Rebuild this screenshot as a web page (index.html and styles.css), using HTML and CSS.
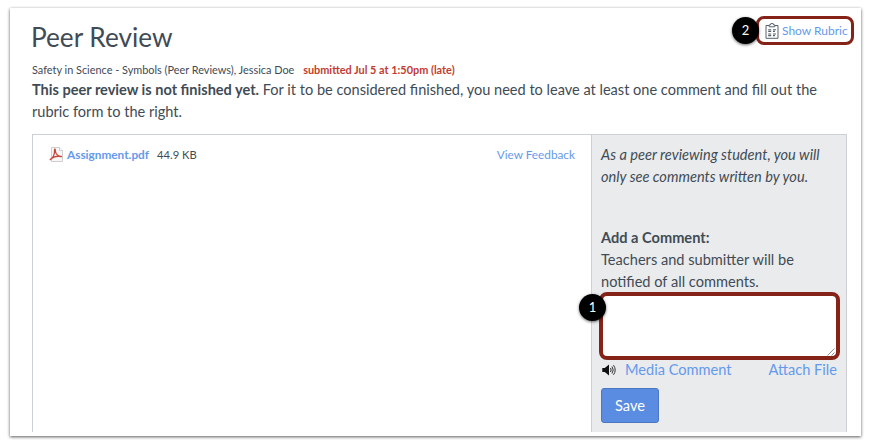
FILE: index.html
```html
<!DOCTYPE html>
<html lang="en">
<head>
<meta charset="utf-8">
<title>Peer Review</title>
<link rel="stylesheet" href="styles.css">
</head>
<body>
<main class="card">
  <header class="head">
    <h1>Peer Review</h1>
    <div class="rubric">
      <span class="step step-rubric">2</span>
      <svg class="rubric-icon" width="14" height="16" viewBox="0 0 14 16" fill="none" stroke="#55606b"><path d="M4 2.500H1v12.800h12V2.500h-3M4.200 3.800h5.600V1.900H8.600L8.200.6H5.800l-.4 1.300H4.200z" stroke-width="1"/><path d="M3.200 6.800h3M8 6.800h3M3.200 8.400h3M8 8.400h2M3.200 11h3M8 11h3M3.200 12.600h3M8 12.600h2" stroke-width="1.100"/></svg>
      <a>Show Rubric</a>
    </div>
  </header>
  <p class="meta">Safety in Science - Symbols (Peer Reviews), Jessica Doe <strong>submitted Jul 5 at 1:50pm (late)</strong></p>
  <p class="notice"><strong>This peer review is not finished yet.</strong> <span>For it to be considered finished, you need to leave at least one comment and fill out the<br>rubric form to the right.</span></p>
  <section class="panel">
    <div class="file">
      <svg class="pdf" width="15" height="15" viewBox="0 0 15 15"><path d="M2.500.5h8l3 3v11h-11z" fill="#f7f7f7" stroke="#cfcfcf"/><path d="M10.500.5v3h3" fill="#fff" stroke="#cfcfcf"/><path d="M.7 12.800C4 11.500 6 7 5.500 3c0-1.500 1-1 .8.7C6.600 7 9.500 9.300 13 9.600M1 12.700C4 9.800 8.500 8.700 13 9.600" fill="none" stroke="#c5483c" stroke-width="1.300"/></svg>
      <a class="name">Assignment.pdf</a><span class="size">44.9 KB</span><a class="feedback">View Feedback</a>
    </div>
    <aside class="side">
      <p class="hint">As a peer reviewing student, you will<br>only see comments written by you.</p>
      <p class="label">Add a Comment:</p>
      <p class="note">Teachers and submitter will be<br>notified of all comments.</p>
      <div class="comment"><span class="step step-comment">1</span>
        <svg class="grip" width="8" height="8" viewBox="0 0 8 8" stroke="#777" stroke-width=".8"><path d="M.5 7.500l7-7M4.500 7.500l3-3"/></svg>
      </div>
      <div class="links">
        <svg width="14" height="12" viewBox="0 0 14 12"><path d="M.3 4h2.500L7 .6v10.800L2.800 8H.3z" fill="#111"/><path d="M8.500 4q1.300 2 0 4M10 2.500q2.400 3.500 0 7M11.500 1.200q3.400 4.800 0 9.600" fill="none" stroke="#333" stroke-width="1"/></svg>
        <a class="media">Media Comment</a><a class="attach">Attach File</a>
      </div>
      <button class="save">Save</button>
    </aside>
  </section>
</main>
</body>
</html>
```
FILE: styles.css
```css
* { box-sizing: border-box; }
body { margin: 0; min-height: 447px; padding: 8px 11px 0 10px; background: #fff; color: #414b55; font-family: Lato, sans-serif; }
h1, p { margin: 0; font-weight: 400; }
a { color: #659aeb; white-space: nowrap; }
strong { font-weight: 700; }
.card { height: 428px; padding: 0 15px 4px 22px; display: flex; flex-direction: column; box-shadow: 0 1px 3px rgba(0,0,0,.65); background: #fff; }
.head { height: 53px; display: flex; flex-shrink: 0; justify-content: space-between; align-items: flex-start; margin-right: -8px; }
h1 { font-size: 26.200px; line-height: 32px; padding-top: 13px; margin-left: -1px; white-space: nowrap; }
.rubric { position: relative; width: 98px; height: 29px; margin: 8px 0 0; padding-left: 6px; display: flex; align-items: center; border: 3px solid #862318; border-radius: 8px; }
.rubric-icon { flex-shrink: 0; margin-top: 1px; }
.rubric a { font-size: 12px; line-height: 16px; margin: 0 0 0 3px; }
.step { position: absolute; width: 27px; height: 27px; border-radius: 50%; background: #000; color: #fff; font-size: 13px; line-height: 27px; text-align: center; box-shadow: 0 1px 3px rgba(0,0,0,.6); }
.step-rubric { left: -27px; top: -2px; }
.step-comment { left: -24px; top: -2px; }
.meta { height: 18px; flex-shrink: 0; font-size: 10.900px; line-height: 18px; white-space: nowrap; }
.meta strong { color: #c33b30; margin-left: 6px; }
.notice { height: 55px; flex-shrink: 0; font-size: 14.560px; line-height: 22px; white-space: nowrap; }
.panel { flex: 1; display: flex; border: 1px solid #ccd0d5; border-bottom: 0; width: 815px; }
.file { flex: 1; height: 39px; padding: 0 16px; display: flex; align-items: center; font-size: 11.800px; }
.pdf { margin-right: 3px; }
.name { font-weight: 700; }
.size { margin-left: 8px; font-size: 11.200px; }
.feedback { margin-left: auto; }
.side { width: 255px; padding: 9px 0 0 9px; background: #e9ebed; border-left: 1px solid #ccd0d5; font-size: 14.600px; line-height: 22px; white-space: nowrap; }
.hint { font-style: italic; height: 83px; }
.label { font-weight: 700; }
.comment { position: relative; width: 241px; height: 68px; margin: -1px 0 0 -2px; border: 4px solid #862318; border-radius: 8px; background: #fff; }
.grip { position: absolute; right: 1px; bottom: 0; }
.links { display: flex; align-items: center; width: 236px; height: 20px; padding-left: 1px; }
.media { margin-left: 9px; }
.attach { margin-left: auto; }
.save { display: block; width: 58px; height: 35px; margin-top: 8px; padding: 0; border: 1px solid #4c76c2; border-radius: 3px; background: #5a8de1; color: #fff; font: 14.600px Lato, sans-serif; }
```
